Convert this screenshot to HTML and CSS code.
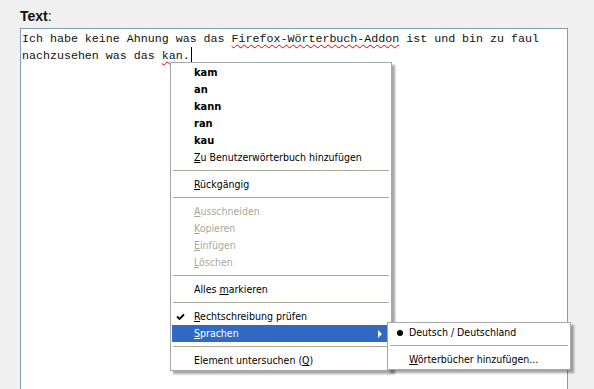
FILE: index.html
```html
<!DOCTYPE html>
<html lang="de">
<head>
  <meta charset="UTF-8">
  <title>Text</title>
  <link rel="stylesheet" href="styles.css">
</head>
<body>
  <div class="field">
    <div class="label"><b>Text</b>:</div>
    <div class="textbox">
      <div class="text">Ich habe keine Ahnung was das <span class="typo">Firefox-Wörterbuch-Addon</span> ist und bin zu faul<br>nachzusehen was das <span class="typo">kan</span>.<span class="caret"></span></div>

      <!-- Context menu -->
      <div class="menu main-menu">
        <div class="item strong">kam</div>
        <div class="item strong">an</div>
        <div class="item strong">kann</div>
        <div class="item strong">ran</div>
        <div class="item strong">kau</div>
        <div class="item"><u>Z</u>u Benutzerwörterbuch hinzufügen</div>
        <div class="sep"></div>
        <div class="item"><u>R</u>ückgängig</div>
        <div class="sep"></div>
        <div class="item off"><u>A</u>usschneiden</div>
        <div class="item off"><u>K</u>opieren</div>
        <div class="item off"><u>E</u>infügen</div>
        <div class="item off"><u>L</u>öschen</div>
        <div class="sep"></div>
        <div class="item">Alles <u>m</u>arkieren</div>
        <div class="sep"></div>
        <div class="item">
          <svg class="check" width="9" height="8" viewBox="0 0 9 8"><path d="M1 3.5 L3.5 6 L8 1.5" fill="none" stroke="#000" stroke-width="1.8"/></svg>
          <u>R</u>echtschreibung prüfen
        </div>
        <div class="item active">
          <u>S</u>prachen
          <span class="arrow"></span>
        </div>
        <div class="sep"></div>
        <div class="item">Element untersuchen (<u>Q</u>)</div>
      </div>

      <div class="menu sub-menu">
        <div class="item"><span class="dot"></span>Deutsch / Deutschland</div>
        <div class="sep"></div>
        <div class="item"><u>W</u>örterbücher hinzufügen...</div>
      </div>
    </div>
  </div>
</body>
</html>
```

FILE: styles.css
```css
body {
  margin: 0;
  background: #f0f0f0;
  font-family: "DejaVu Sans Condensed", "DejaVu Sans", sans-serif;
  color: #000;
  overflow: hidden;
}

.field {
  padding: 8px 0 0 20px;
}

.label {
  font-family: "Liberation Sans", Arial, sans-serif;
  font-size: 14px;
  line-height: 16px;
  height: 20px;
  color: #111;
}

/* Text area */
.textbox {
  position: relative;
  width: 544px;
  height: 356px;
  background: #fff;
  border: 1px solid #7f9db9;
  border-bottom: none;
  padding: 2px 1px;
}

.text {
  font-family: "Liberation Mono", "Courier New", monospace;
  font-size: 11.65px;
  line-height: 16px;
  color: #111;
}

.typo {
  text-decoration: underline wavy #e00000;
  text-decoration-thickness: 1px;
  text-underline-offset: 2px;
}

.caret {
  display: inline-block;
  width: 1px;
  height: 15px;
  background: #000;
  vertical-align: -3px;
  margin-left: 1px;
}

/* Menus */
.menu {
  position: absolute;
  background: #fff;
  border: 1px solid #a7a6aa;
  padding: 1px 1px;
  font-size: 10.5px;
  box-shadow: 3px 3px 2px rgba(0, 0, 0, 0.35);
}

.main-menu {
  left: 149px;
  top: 33px;
  width: 218px;
}

.sub-menu {
  left: 366px;
  top: 293px;
  width: 180px;
  z-index: 2;
}

.item {
  position: relative;
  height: 17px;
  line-height: 17px;
  padding-left: 22px;
  white-space: nowrap;
}

.sub-menu .item {
  padding-left: 20px;
}

.item u {
  text-underline-offset: 1px;
}

.strong {
  font-weight: 700;
  font-size: 11px;
}

.off {
  color: #aca899;
}

.active {
  background: #316ac5;
  color: #fff;
}

.sep {
  height: 1px;
  background: #aca899;
  margin: 4px 1px 5px;
}

.check {
  position: absolute;
  left: 4px;
  top: 5px;
}

.arrow {
  position: absolute;
  right: 8px;
  top: 5px;
  border-left: 4px solid #fff;
  border-top: 4px solid transparent;
  border-bottom: 4px solid transparent;
}

.dot {
  position: absolute;
  left: 8px;
  top: 6px;
  width: 6px;
  height: 6px;
  border-radius: 50%;
  background: #000;
}
```
